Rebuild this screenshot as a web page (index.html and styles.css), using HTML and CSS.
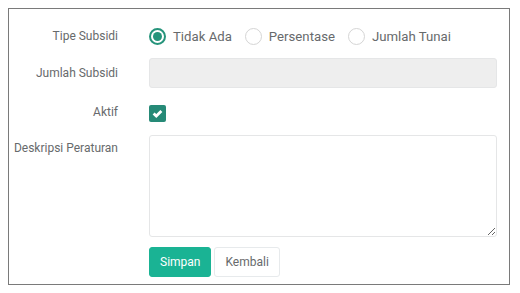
FILE: index.html
```html
<!DOCTYPE html>
<html lang="id">
<head>
    <meta charset="UTF-8">
    <meta name="viewport" content="width=device-width, initial-scale=1.0">
    <title>Subsidi</title>
    <link rel="stylesheet" href="styles.css">
</head>
<body>
    <form class="panel">
        <div class="form-row">
            <label class="form-label">Tipe Subsidi</label>
            <div class="radio-group">
                <label class="radio-item"><input type="radio" name="tipe" value="0" checked><span class="radio-mark"></span>Tidak Ada</label>
                <label class="radio-item"><input type="radio" name="tipe" value="1"><span class="radio-mark"></span>Persentase</label>
                <label class="radio-item"><input type="radio" name="tipe" value="2"><span class="radio-mark"></span>Jumlah Tunai</label>
            </div>
        </div>
        <div class="form-row">
            <label class="form-label">Jumlah Subsidi</label>
            <input class="form-input" type="text" disabled>
        </div>
        <div class="form-row row-check">
            <label class="form-label">Aktif</label>
            <div class="check-wrap">
                <span class="check-box">
                    <svg width="11" height="9" viewBox="0 0 11 9"><path d="M1.6 4.4 L4.3 7 L9.4 1.9" fill="none" stroke="#fff" stroke-width="2.8"/></svg>
                </span>
            </div>
        </div>
        <div class="form-row">
            <label class="form-label label-top">Deskripsi Peraturan</label>
            <textarea class="form-text"></textarea>
        </div>
        <div class="form-row actions">
            <span></span>
            <div class="btn-group">
                <button type="button" class="btn btn-primary">Simpan</button>
                <button type="button" class="btn btn-white">Kembali</button>
            </div>
        </div>
    </form>
</body>
</html>
```

FILE: styles.css
```css
body{
    margin: 8px;
    font-family: Roboto, "Liberation Sans", sans-serif;
    color: #676a6c;
    background: #ffffff;
}
.panel{
    width: 500px;
    border: 1px solid #7a7a7a;
    padding: 12px 0 7px 0;
}
.form-row{
    display: grid;
    grid-template-columns: 109px 348px;
    column-gap: 31px;
    margin-bottom: 7px;
}
.form-label{
    font-size: 12px;
    line-height: 30px;
    text-align: right;
    color: #676a6c;
}
.label-top{
    line-height: 26px;
}
/* radios */
.radio-group{
    display: flex;
    align-items: center;
    height: 30px;
    gap: 13px;
}
.radio-item{
    display: flex;
    align-items: center;
    gap: 7px;
    font-size: 13.2px;
    cursor: pointer;
}
.radio-item input{
    display: none;
}
.radio-mark{
    width: 15px;
    height: 15px;
    border: 1px solid #d5d5d5;
    border-radius: 50%;
    background: #fff;
    position: relative;
}
.radio-item input:checked + .radio-mark{
    border: 2px solid #26947b;
    width: 13px;
    height: 13px;
}
.radio-item input:checked + .radio-mark::after{
    content: '';
    position: absolute;
    top: 2px;
    left: 2px;
    width: 9px;
    height: 9px;
    border-radius: 50%;
    background: #26947b;
}
.form-input{
    height: 30px;
    box-sizing: border-box;
    border: 1px solid #e5e6e7;
    border-radius: 3px;
    background: #eeeeee;
    margin: 0;
}
.row-check{
    margin-top: 9px;
    height: 31px;
}
.check-wrap{
    display: flex;
    align-items: center;
    padding-top: 1px;
}
.check-box{
    width: 17px;
    height: 17px;
    border-radius: 2px;
    background: #268a77;
    display: flex;
    align-items: center;
    justify-content: center;
}
.form-text{
    height: 102px;
    box-sizing: border-box;
    border: 1px solid #e5e6e7;
    border-radius: 3px;
    margin: 0;
    font-family: inherit;
    resize: both;
}
.actions{
    margin-top: 10px;
    margin-bottom: 0;
}
.btn-group{
    display: flex;
    gap: 3px;
}
.btn{
    height: 30px;
    font-family: inherit;
    font-size: 12px;
    border-radius: 3px;
    padding: 0 10px;
    cursor: pointer;
}
.btn-primary{
    background: #1ab394;
    border: 1px solid #1ab394;
    color: #ffffff;
}
.btn-white{
    background: #ffffff;
    border: 1px solid #e7eaec;
    color: #676a6c;
}
```
